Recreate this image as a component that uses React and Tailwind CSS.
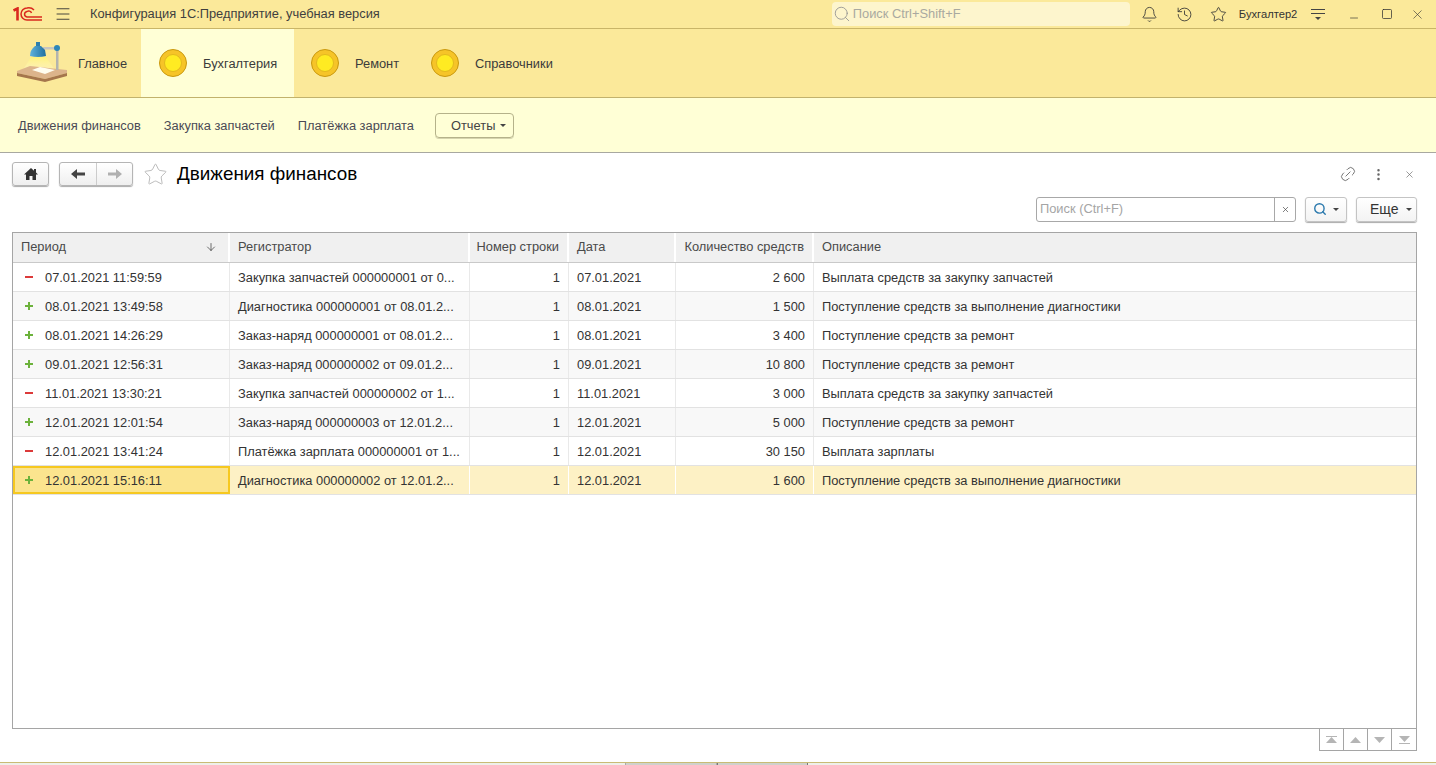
import React from 'react';
import { Bell, History, Star, Search, Link2, X, Minus, Square, ArrowDown, EllipsisVertical, Menu } from 'lucide-react';

const rows = [
  ['-', '07.01.2021 11:59:59', 'Закупка запчастей 000000001 от 0...', '07.01.2021', '2 600', 'Выплата средств за закупку запчастей'],
  ['+', '08.01.2021 13:49:58', 'Диагностика 000000001 от 08.01.2...', '08.01.2021', '1 500', 'Поступление средств за выполнение диагностики'],
  ['+', '08.01.2021 14:26:29', 'Заказ-наряд 000000001 от 08.01.2...', '08.01.2021', '3 400', 'Поступление средств за ремонт'],
  ['+', '09.01.2021 12:56:31', 'Заказ-наряд 000000002 от 09.01.2...', '09.01.2021', '10 800', 'Поступление средств за ремонт'],
  ['-', '11.01.2021 13:30:21', 'Закупка запчастей 000000002 от 1...', '11.01.2021', '3 000', 'Выплата средств за закупку запчастей'],
  ['+', '12.01.2021 12:01:54', 'Заказ-наряд 000000003 от 12.01.2...', '12.01.2021', '5 000', 'Поступление средств за ремонт'],
  ['-', '12.01.2021 13:41:24', 'Платёжка зарплата 000000001 от 1...', '12.01.2021', '30 150', 'Выплата зарплаты'],
  ['+', '12.01.2021 15:16:11', 'Диагностика 000000002 от 12.01.2...', '12.01.2021', '1 600', 'Поступление средств за выполнение диагностики'],
];

const cols = 'grid grid-cols-[217px_240px_99px_107px_138px_1fr]';

function Coin() {
  return (
    <svg width="28" height="28" viewBox="0 0 28 28" className="shrink-0">
      <circle cx="14" cy="14" r="13.5" fill="#f6c428" stroke="#c9980f" />
      <circle cx="14" cy="14" r="8.5" fill="#ffeb22" stroke="#e3b81e" />
    </svg>
  );
}

function Lamp() {
  return (
    <svg width="52" height="44" viewBox="0 0 52 44" className="shrink-0">
      <defs>
        <linearGradient id="shade" x1="0" x2="1" y1="0" y2="0">
          <stop offset="0" stopColor="#5fb2dc" />
          <stop offset="1" stopColor="#1f6f9f" />
        </linearGradient>
        <linearGradient id="beam" x1="0" x2="0" y1="0" y2="1">
          <stop offset="0" stopColor="#fff27a" />
          <stop offset="1" stopColor="#fff8c8" stopOpacity="0.4" />
        </linearGradient>
      </defs>
      <path d="M15 16 L7 29 L39 29 L30 16 Z" fill="url(#beam)" />
      <path d="M1 30 L14 25 L51 29 L51 32 L29 38 L1 32 Z" fill="#dcb48b" />
      <path d="M1 32 L29 38 L51 32 L51 35 L29 41 L1 35 Z" fill="#a5764c" />
      <path d="M16 29 L24 26 L39 29 L29 33 Z" fill="#fffdf0" />
      <rect x="40" y="7" width="2.5" height="22" fill="#b4b4ae" />
      <rect x="27" y="6" width="14" height="2.5" fill="#c6c6c0" />
      <circle cx="41" cy="7" r="3" fill="#2c86b8" />
      <rect x="20" y="1" width="4" height="4" fill="#2d7fae" />
      <path d="M19 5 L25 5 L29 9 L30 15 Q22 17 14 15 Q14 9 19 5 Z" fill="url(#shade)" />
    </svg>
  );
}

function Logo() {
  return (
    <svg width="29" height="14" viewBox="0 0 29 14" fill="none" stroke="#d9281e">
      <path d="M0.5 3.5 L4.5 1.5 V13.5" strokeWidth="2.6" />
      <path d="M21 3 A7 6 0 0 0 14 1 A6 6 0 0 0 14 13 H29" strokeWidth="1.5" />
      <path d="M18.5 6 A3 3 0 0 0 14 4.5 A3 2.8 0 0 0 14 10 H29" strokeWidth="1.5" />
    </svg>
  );
}

function HomeIcon() {
  return (
    <svg width="14" height="12" viewBox="0 0 14 12" fill="#333">
      <path d="M7 0 L10 2.7 V1 H12 V4.5 L14 6.5 H12 V12 H8.5 V8 H5.5 V12 H2 V6.5 H0 Z" />
    </svg>
  );
}

function NavArrow({ flip, color }) {
  return (
    <svg width="14" height="10" viewBox="0 0 14 10" fill={color} className={flip ? 'rotate-180' : ''}>
      <path d="M0 5 L6 0 V3.5 H14 V6.5 H6 V10 Z" />
    </svg>
  );
}

function Section({ label, active, children, className }) {
  return (
    <div className={`flex h-full items-center ${active ? 'bg-[#ffffd6]' : ''} ${className}`}>
      {children}
      <span className="pt-[2px] text-[12.85px] text-[#3b3b3b]">{label}</span>
    </div>
  );
}

function Caret() {
  return <span className="inline-block h-0 w-0 border-x-[3px] border-t-[3px] border-x-transparent border-t-[#444]" />;
}

function HeadCell({ children, right, className = '' }) {
  return (
    <div className={`flex h-full items-center whitespace-nowrap border-r-2 border-white px-2 pb-[2px] text-[12.85px] text-[#4a4a4a] last:border-r-0 ${right ? 'justify-end' : ''} ${className}`}>
      {children}
    </div>
  );
}

function Cell({ children, right, selected }) {
  return (
    <div className={`flex h-full min-w-0 items-center border-r px-2 pt-[2px] text-[12.85px] text-[#333] last:border-r-0 ${right ? 'justify-end' : ''} ${selected ? 'border-r-white' : 'border-r-[#e9e9e9]'}`}>
      <span className="whitespace-nowrap">{children}</span>
    </div>
  );
}

function NavBtn({ children }) {
  return <div className="flex h-[21px] w-[24px] items-center justify-center border-r border-[#a5a5a5] last:border-r-0">{children}</div>;
}

export default function App() {
  return (
    <div className="flex h-[765px] w-[1436px] flex-col overflow-hidden bg-white font-['Liberation_Sans',Arial,sans-serif]">
      {/* top bar */}
      <div className="flex h-[29px] shrink-0 items-center border-b border-[#c9b568] bg-[#fbe99a]">
        <div className="ml-[13px] flex w-[30px]"><Logo /></div>
        <Menu size={18} strokeWidth={1.2} className="ml-[11px] text-[#333]" />
        <span className="ml-[18px] text-[12.85px] text-[#3f3f3f]">Конфигурация 1С:Предприятие, учебная версия</span>
        <div className="ml-[452px] flex h-[24px] w-[298px] items-center rounded-sm bg-[#fdf5cd] pl-[1px] text-[12.85px] text-[#a9a9a0]">
          <Search size={18} strokeWidth={1.1} className="mr-[2px] text-[#8f8f8f]" />
          Поиск Ctrl+Shift+F
        </div>
        <Bell size={17} strokeWidth={1.2} className="ml-[11px] text-[#333]" />
        <History size={17} strokeWidth={1.2} className="ml-[18px] text-[#333]" />
        <Star size={17} strokeWidth={1.2} className="ml-[17px] text-[#333]" />
        <span className="ml-[12px] text-[11.2px] text-[#333]">Бухгалтер2</span>
        <div className="ml-[14px] flex w-[14px] flex-col items-center gap-[3px]">
          <div className="h-px w-full bg-[#444]" />
          <div className="h-px w-full bg-[#444]" />
          <Caret />
        </div>
        <Minus size={12} strokeWidth={1.3} className="ml-[23px] translate-y-[4px] text-[#333]" />
        <Square size={12} strokeWidth={1.5} className="ml-[21px] text-[#333]" />
        <X size={15} strokeWidth={1} className="ml-[17px] text-[#333]" />
      </div>

      {/* sections */}
      <div className="flex h-[69px] shrink-0 items-center border-b border-[#c2b26c] bg-[#fbe99a]">
        <Section label="Главное" className="w-[141px] gap-[10px] pl-[16px]"><Lamp /></Section>
        <Section label="Бухгалтерия" active className="w-[153px] gap-[16px] pl-[18px]"><Coin /></Section>
        <Section label="Ремонт" className="w-[122px] gap-[16px] pl-[17px]"><Coin /></Section>
        <Section label="Справочники" className="gap-[16px] pl-[15px]"><Coin /></Section>
      </div>

      {/* functions */}
      <div className="flex h-[55px] shrink-0 items-center border-b border-[#a8a8a0] bg-[#ffffd6] pl-[18px] text-[12.85px] text-[#4a4a55]">
        <span className="pt-[2px]">Движения финансов</span>
        <span className="ml-[23px] pt-[2px]">Закупка запчастей</span>
        <span className="ml-[23px] pt-[2px]">Платёжка зарплата</span>
        <div className="ml-[21px] flex h-[25px] w-[79px] items-center gap-[5px] rounded-[4px] border border-[#b5b28a] pl-[15px] pt-[1px] text-[#444] shadow-[0_1px_0_#d6d4ae]">
          Отчеты <Caret />
        </div>
      </div>

      {/* form */}
      <div className="flex min-h-0 flex-1 flex-col pl-[12px] pr-[19px]">
        <div className="mt-[8px] flex h-[26px] shrink-0 items-center">
          <div className="flex h-[24px] w-[37px] items-center justify-center rounded-[3px] border border-[#b5b5b5] bg-gradient-to-b from-white to-[#efefef] shadow-[0_1px_1px_#aaa]">
            <HomeIcon />
          </div>
          <div className="ml-[10px] flex h-[24px] w-[74px] items-center rounded-[3px] border border-[#b5b5b5] bg-gradient-to-b from-white to-[#efefef] shadow-[0_1px_1px_#aaa]">
            <div className="flex h-full w-[37px] items-center justify-center border-r border-[#ccc]">
              <NavArrow color="#444" />
            </div>
            <div className="flex flex-1 items-center justify-center">
              <NavArrow flip color="#b0b0b0" />
            </div>
          </div>
          <Star size={25} strokeWidth={0.8} className="ml-[10px] text-[#aeaeae]" />
          <h1 className="ml-[9px] text-[18.85px] leading-none text-black">Движения финансов</h1>
          <div className="ml-auto flex items-center text-[#666]">
            <Link2 size={18} strokeWidth={1.1} className="-rotate-45" />
            <EllipsisVertical size={15} strokeWidth={2} className="ml-[14px]" />
            <X size={11} strokeWidth={1.4} className="ml-[18px] mr-[2px]" />
          </div>
        </div>

        <div className="mt-[9px] flex h-[26px] shrink-0 items-center justify-end">
          <div className="flex h-[25px] w-[260px] items-center rounded-[3px] border border-[#a8a8a8] text-[12.85px] text-[#a5a5a5]">
            <span className="flex-1 pl-[3px]">Поиск (Ctrl+F)</span>
            <div className="flex h-full w-[21px] items-center justify-center border-l border-[#a8a8a8]">
              <X size={9} strokeWidth={1.8} className="text-[#444]" />
            </div>
          </div>
          <div className="ml-[9px] flex h-[25px] w-[42px] items-center justify-center gap-[6px] rounded-[3px] border border-[#c4c4c4] bg-gradient-to-b from-white to-[#f3f3f3] shadow-[0_1px_1px_#aaa]">
            <Search size={14} strokeWidth={2.4} className="text-[#2b79ad]" />
            <Caret />
          </div>
          <div className="ml-[9px] flex h-[25px] w-[61px] items-center gap-[7px] rounded-[3px] border border-[#c4c4c4] bg-gradient-to-b from-white to-[#f3f3f3] pl-[13px] text-[14px] text-[#333] shadow-[0_1px_1px_#aaa]">
            Еще <Caret />
          </div>
        </div>

        {/* table */}
        <div className="mt-[10px] flex h-[497px] shrink-0 flex-col border border-[#a5a5a5]">
          <div className={`${cols} h-[30px] shrink-0 border-b border-[#c9c9c9] bg-[#f0f0f0]`}>
            <HeadCell className="justify-between">
              Период
              <ArrowDown size={12} strokeWidth={1.4} className="mr-[3px] text-[#333]" />
            </HeadCell>
            <HeadCell>Регистратор</HeadCell>
            <HeadCell right>Номер строки</HeadCell>
            <HeadCell>Дата</HeadCell>
            <HeadCell right>Количество средств</HeadCell>
            <HeadCell>Описание</HeadCell>
          </div>
          {rows.map((r, i) => {
            const selected = i === rows.length - 1;
            return (
              <div
                key={i}
                className={`${cols} h-[29px] shrink-0 border-b border-[#e2e2e2] ${selected ? 'bg-[#fdf1c5]' : i % 2 ? 'bg-[#f8f8f8]' : 'bg-white'}`}
              >
                <div className={`flex h-full items-center text-[12.85px] text-[#333] ${selected ? 'border-2 border-[#f6c81f] bg-[#fbe48e] pl-[10px]' : 'border-r border-r-[#e9e9e9] pl-[12px]'}`}>
                  {r[0] === '+' ? (
                    <span className="relative mr-[12px] h-[8px] w-[8px]">
                      <span className="absolute left-0 top-[3px] h-[2px] w-[8px] bg-[#6cb23c]" />
                      <span className="absolute left-[3px] top-0 h-[8px] w-[2px] bg-[#6cb23c]" />
                    </span>
                  ) : (
                    <span className="mr-[12px] h-[2px] w-[8px] bg-[#dc3a3a]" />
                  )}
                  <span className="pt-[2px]">{r[1]}</span>
                </div>
                <Cell selected={selected}>{r[2]}</Cell>
                <Cell right selected={selected}>1</Cell>
                <Cell selected={selected}>{r[3]}</Cell>
                <Cell right selected={selected}>{r[4]}</Cell>
                <Cell selected={selected}>{r[5]}</Cell>
              </div>
            );
          })}
        </div>

        <div className="flex justify-end">
          <div className="flex border border-t-0 border-[#a5a5a5]">
            <NavBtn>
              <svg width="11" height="8" viewBox="0 0 11 8" fill="#b5b5b5"><rect width="11" height="1" /><path d="M5.5 1 L11 7 H0 Z" /></svg>
            </NavBtn>
            <NavBtn>
              <svg width="11" height="6" viewBox="0 0 11 6" fill="#b5b5b5"><path d="M5.5 0 L11 6 H0 Z" /></svg>
            </NavBtn>
            <NavBtn>
              <svg width="11" height="6" viewBox="0 0 11 6" fill="#b5b5b5"><path d="M0 0 H11 L5.5 6 Z" /></svg>
            </NavBtn>
            <NavBtn>
              <svg width="11" height="8" viewBox="0 0 11 8" fill="#b5b5b5"><path d="M0 0 H11 L5.5 6 Z" /><rect y="7" width="11" height="1" /></svg>
            </NavBtn>
          </div>
        </div>
      </div>

      {/* open windows strip */}
      <div className="flex h-[3px] shrink-0 border-t border-[#c9bb75] bg-[#eef0ea]">
        <div className="ml-[625px] h-full w-[92px] border-x border-[#aaa] bg-[#cfd1cc]" />
        <div className="h-full w-[91px] border-x border-[#777] bg-[#cfd1cc]" />
      </div>
    </div>
  );
}
